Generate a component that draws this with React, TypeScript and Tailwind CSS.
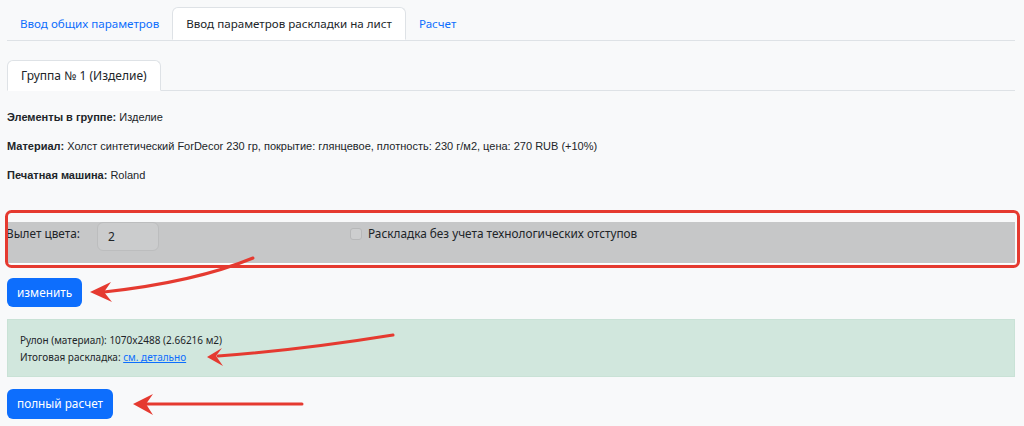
import React from 'react'

const ui = { fontFamily: '"Noto Sans", "Open Sans", sans-serif' }
const arial = { fontFamily: '"Liberation Sans", Arial, sans-serif' }

function Arrows() {
    return (
        <svg className="absolute inset-0 pointer-events-none" width="1024" height="426" viewBox="0 0 1024 426">
            <g fill="none" stroke="#e53a30" strokeWidth="3" strokeLinecap="round">
                <path d="M253 258 Q 195 282 104 292" />
                <path d="M393 335 Q 300 350 218 356" />
                <path d="M302 404 L 146 404" />
            </g>
            <g fill="#e53a30">
                <polygon points="90,292 111,282 104,292 112,302" />
                <polygon points="207,357 222,348 216,356 223,366" />
                <polygon points="133,404 153,394 146,404 153,415" />
            </g>
            <rect x="6.5" y="211.5" width="1012" height="55" rx="5" fill="none" stroke="#e53a30" strokeWidth="3" />
        </svg>
    )
}

export default function App() {
    return (
        <div className="relative w-full h-[426px] overflow-hidden bg-[#f8f9fa] pl-[7px] pr-[9px] pt-[7px]">
            {/* top tabs */}
            <div className="flex border-b border-[#dee2e6] text-[11.6px]" style={ui}>
                <div className="h-[33px] px-[13px] flex items-center text-[#0d6efd]">Ввод общих параметров</div>
                <div className="h-[33px] -mb-px px-[13px] flex items-center bg-white border border-[#dee2e6] border-b-white rounded-t-md text-[#212529]">
                    Ввод параметров раскладки на лист
                </div>
                <div className="h-[33px] px-[13px] flex items-center text-[#0d6efd]">Расчет</div>
            </div>

            {/* group tabs */}
            <div className="mt-[19px] flex border-b border-[#dee2e6] text-[12px]" style={ui}>
                <div className="h-[31px] -mb-px px-[13px] flex items-center bg-white border border-[#dee2e6] border-b-white rounded-t-md text-[#212529]">
                    Группа № 1 (Изделие)
                </div>
            </div>

            {/* info */}
            <div className="pt-[20px] text-[11px] text-[#212529] space-y-[16px] leading-[13px]" style={arial}>
                <p><b>Элементы в группе:</b> Изделие</p>
                <p><b>Материал:</b> Холст синтетический ForDecor 230 гр, покрытие: глянцевое, плотность: 230 г/м2, цена: 270 RUB (+10%)</p>
                <p><b>Печатная машина:</b> Roland</p>
            </div>

            {/* params row */}
            <div className="mt-[40px] h-[42px] grid grid-cols-[90px_253px_1fr] items-start bg-[#c6c7c8] border-b border-white text-[11.8px] text-[#212529]" style={ui}>
                <div className="pt-[3px] -ml-[1px]">Вылет цвета:</div>
                <div className="w-[62px] h-[29px] rounded-md border border-[#bcbdbe] bg-[#cbcccd] px-[10px] flex items-center text-[12px]">2</div>
                <label className="flex items-center gap-[6px] pt-[3px]">
                    <span className="w-[12px] h-[12px] rounded-[3px] border border-[#b7b8b9] bg-[#cdcecf]" />
                    Раскладка без учета технологических отступов
                </label>
            </div>

            <button className="mt-[14px] h-[29px] px-[10px] rounded-md bg-[#0d6efd] text-white text-[11.8px]" style={ui}>
                изменить
            </button>

            {/* result */}
            <div className="mt-[12px] h-[58px] border border-[#c9e2d6] bg-[#d1e7dd] px-[12px] pt-[12px] text-[10px] leading-[17px] text-[#212529]" style={ui}>
                <div>Рулон (материал): 1070x2488 (2.66216 м2)</div>
                <div>
                    Итоговая раскладка: <a className="text-[#0d6efd] underline">см. детально</a>
                </div>
            </div>

            <button className="mt-[12px] h-[30px] px-[10px] rounded-md bg-[#0d6efd] text-white text-[11.8px]" style={ui}>
                полный расчет
            </button>

            <Arrows />
        </div>
    )
}
